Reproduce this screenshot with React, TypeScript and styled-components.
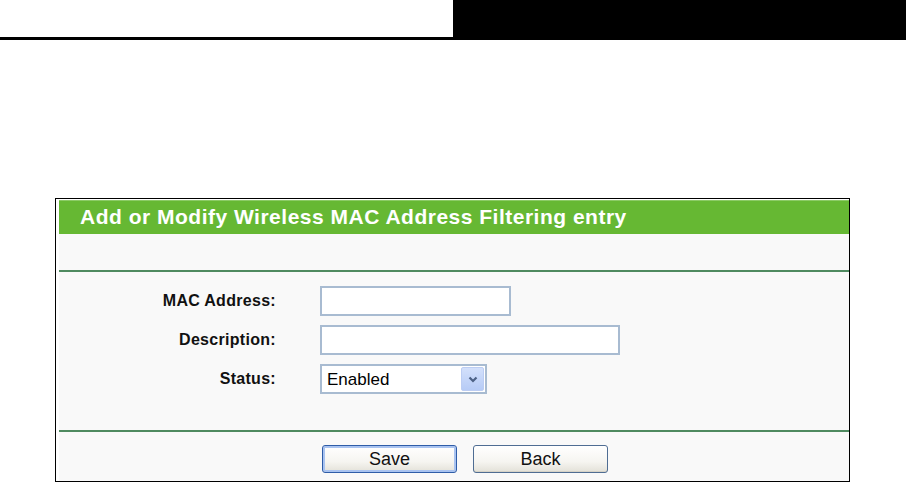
import React from "react";
import styled, { createGlobalStyle } from "styled-components";

const GlobalStyle = createGlobalStyle`
  html, body {
    margin: 0;
    padding: 0;
    background: #ffffff;
    font-family: "Liberation Sans", Arial, sans-serif;
  }
`;

const TopBar = styled.div`
  display: flex;
  height: 40px;
`;

const TopLeft = styled.div`
  width: 453px;
  box-sizing: border-box;
  border-bottom: 3px solid #000;
`;

const TopRight = styled.div`
  flex: 1;
  background: #000;
`;

const Panel = styled.div`
  margin: 158px 0 0 55px;
  width: 795px;
  box-sizing: border-box;
  border: 1px solid #000;
  background: #fff;
  padding: 1px 0 0 3px;
`;

const Header = styled.div`
  height: 34px;
  box-sizing: border-box;
  background: #66b833;
  border-top: 1px solid #8ccb66;
  color: #fff;
  font-weight: bold;
  font-size: 21px;
  letter-spacing: 0.5px;
  padding-left: 21px;
  line-height: 32px;
`;

const Spacer = styled.div`
  height: 36px;
  background: #f9f9f9;
`;

const Divider = styled.div`
  height: 2px;
  background: #4f8a60;
  box-shadow: 0 1px 0 #d5e6d9;
`;

const Form = styled.div`
  display: grid;
  grid-template-columns: 217px 1fr;
  column-gap: 44px;
  row-gap: 9px;
  padding: 14px 0 36px;
  background: #f9f9f9;
`;

const Label = styled.label`
  align-self: center;
  text-align: right;
  font-weight: bold;
  font-size: 16px;
  letter-spacing: 0.3px;
  color: #111;
`;

const TextInput = styled.input<{ $w: number }>`
  width: ${(p) => p.$w}px;
  height: 30px;
  box-sizing: border-box;
  border: 2px solid #a8bbd1;
  background: #fff;
  outline: none;
  font-family: inherit;
  font-size: 16px;
`;

const Select = styled.div`
  width: 167px;
  height: 30px;
  box-sizing: border-box;
  border: 2px solid #a8bbd1;
  background: #fff;
  display: flex;
  align-items: stretch;
  justify-content: space-between;
  padding: 1px;
`;

const SelectText = styled.span`
  font-size: 17px;
  color: #000;
  line-height: 26px;
  padding-left: 4px;
`;

const DropButton = styled.span`
  width: 21px;
  border: 1px solid #bccdf3;
  border-radius: 2px;
  background: linear-gradient(#d3e0fb, #b6cbf6);
  display: flex;
  align-items: center;
  justify-content: center;
`;

const ButtonBar = styled.div`
  display: flex;
  gap: 16px;
  padding: 13px 0 8px 263px;
  background: #f9f9f9;
`;

const Button = styled.button<{ $primary?: boolean }>`
  width: 135px;
  height: 28px;
  box-sizing: border-box;
  border: 1px solid ${(p) => (p.$primary ? "#2f5da8" : "#4f6d93")};
  border-radius: 3px;
  background: linear-gradient(#ffffff 0%, #f6f5f1 60%, #e3e1d8 100%);
  box-shadow: ${(p) =>
    p.$primary ? "inset 0 0 0 2px #a9c3f0" : "inset 0 -1px 0 #d6d3c8"};
  font-family: inherit;
  font-size: 18px;
  color: #111;
  padding: 0;
  line-height: 24px;
`;

export default function App() {
  return (
    <>
      <GlobalStyle />
      <TopBar>
        <TopLeft />
        <TopRight />
      </TopBar>
      <Panel>
        <Header>Add or Modify Wireless MAC Address Filtering entry</Header>
        <Spacer />
        <Divider />
        <Form>
          <Label>MAC Address:</Label>
          <div>
            <TextInput $w={191} />
          </div>
          <Label>Description:</Label>
          <div>
            <TextInput $w={300} />
          </div>
          <Label>Status:</Label>
          <Select>
            <SelectText>Enabled</SelectText>
            <DropButton>
              <svg width="10" height="7" viewBox="0 0 10 7">
                <polyline points="1.5,1.5 5,5 8.5,1.5" fill="none" stroke="#4d6185" strokeWidth="2.2" />
              </svg>
            </DropButton>
          </Select>
        </Form>
        <Divider />
        <ButtonBar>
          <Button $primary>Save</Button>
          <Button>Back</Button>
        </ButtonBar>
      </Panel>
    </>
  );
}
